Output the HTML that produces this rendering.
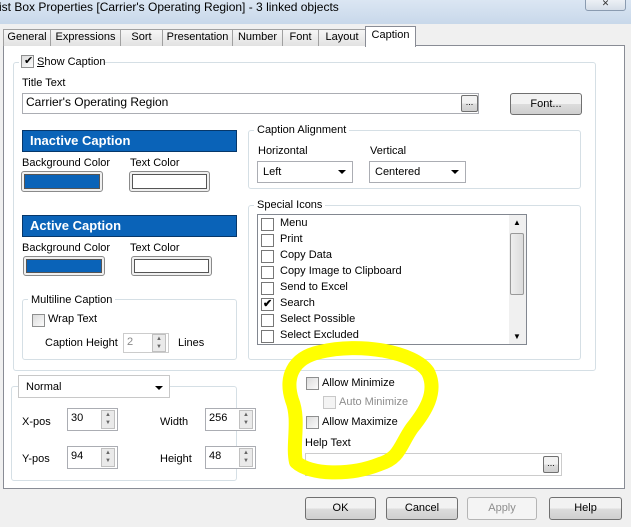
<!DOCTYPE html>
<html><head><style>
*{box-sizing:border-box}
body{margin:0;width:631px;height:527px;overflow:hidden;background:#f0f0f0;font-family:"Liberation Sans",sans-serif;font-size:11px;color:#000;position:relative}
.a{position:absolute}
.t{position:absolute;white-space:nowrap;line-height:14px}
.tab{position:absolute;top:29px;height:17px;border:1px solid #a0a0a0;border-bottom:none;background:linear-gradient(#f6f6f6,#e2e2e2);text-align:center;line-height:15px;font-size:11px}
.gb{position:absolute;border:1px solid #d5dfe5;border-radius:3px}
.in{position:absolute;background:#fff;border:1px solid #abadb3}
.btn{position:absolute;border:1px solid #707070;border-radius:3px;background:linear-gradient(#f2f2f2 50%,#dddddd 50%,#cfcfcf);text-align:center}
.cb{position:absolute;width:13px;height:13px;border:1px solid #8e8f8f;background:linear-gradient(135deg,#dcdcdc,#fbfbfb)}
.sw{position:absolute;border:1px solid #8a8a8a;border-radius:3px;padding:2px;background:#f0f0f0}
.sw div{width:100%;height:100%;border:1px solid #555}
.spin{position:absolute;width:14px;border:1px solid #c0c0c0;background:#eaeaea;font-size:6px;color:#666;text-align:center;line-height:8px}
.cap{position:absolute;background:#0a63b8;color:#fff;font-weight:bold;font-size:13px;padding-left:7px;line-height:20px;border:1px solid #06376a}
.combo{position:absolute;background:#fff;border:1px solid #abadb3}
.arr{position:absolute;right:6px;top:8px;width:0;height:0;border-left:4px solid transparent;border-right:4px solid transparent;border-top:4px solid #000}
.li{position:absolute;left:3px;height:16px}
.li .cb{left:0;top:2px;background:#fff;border-color:#777}
.li span{position:absolute;left:19px;top:1px;white-space:nowrap}
</style></head><body>
<div class="a" style="left:0;top:0;width:631px;height:24px;background:linear-gradient(#dbe6f3,#c8d8ea)"></div>
<div class="t" style="left:-1px;top:0px;font-size:12px">ist Box Properties [Carrier's Operating Region] - 3 linked objects</div>
<div class="a" style="left:585px;top:-3px;width:41px;height:14px;border:1px solid #8a9bb0;border-radius:3px;background:linear-gradient(#f1f4f8,#d5dde8);font-size:9px;text-align:center;color:#333">✕</div>
<div class="a" style="left:0;top:24px;width:631px;height:503px;background:#f0f0f0"></div>
<div class="a" style="left:3px;top:45px;width:622px;height:444px;border:1px solid #898c95;background:#fff"></div>
<div class="tab" style="left:3px;width:48px">General</div>
<div class="tab" style="left:50px;width:71px">Expressions</div>
<div class="tab" style="left:120px;width:43px">Sort</div>
<div class="tab" style="left:162px;width:71px">Presentation</div>
<div class="tab" style="left:232px;width:51px">Number</div>
<div class="tab" style="left:282px;width:37px">Font</div>
<div class="tab" style="left:318px;width:48px">Layout</div>
<div class="tab" style="left:365px;top:26px;width:51px;height:21px;background:#fff;border-color:#898c95;line-height:17px">Caption</div>
<div class="gb" style="left:13px;top:62px;width:583px;height:309px"></div>
<div class="a" style="left:19px;top:54px;width:86px;height:16px;background:#fff"></div>
<div class="cb" style="left:21px;top:55px"></div><div class="t" style="left:24px;top:54px;font-size:11px">✔</div>
<div class="t" style="left:37px;top:55px"><u>S</u>how Caption</div>
<div class="t" style="left:22px;top:76px">Title Text</div>
<div class="in" style="left:22px;top:93px;width:457px;height:21px"></div>
<div class="t" style="left:26px;top:95px;font-size:12px">Carrier's Operating Region</div>
<div class="btn" style="left:461px;top:95px;width:17px;height:17px;font-size:9px;line-height:13px;border-radius:2px">...</div>
<div class="btn" style="left:510px;top:93px;width:72px;height:22px;line-height:20px">Font...</div>
<div class="cap" style="left:22px;top:130px;width:215px;height:22px">Inactive Caption</div>
<div class="t" style="left:22px;top:156px">Background Color</div>
<div class="t" style="left:130px;top:156px">Text Color</div>
<div class="sw" style="left:21px;top:171px;width:82px;height:21px"><div style="background:#0a63b8"></div></div>
<div class="sw" style="left:129px;top:171px;width:81px;height:21px"><div style="background:#fff"></div></div>
<div class="cap" style="left:22px;top:215px;width:215px;height:22px">Active Caption</div>
<div class="t" style="left:22px;top:241px">Background Color</div>
<div class="t" style="left:130px;top:241px">Text Color</div>
<div class="sw" style="left:23px;top:256px;width:82px;height:20px"><div style="background:#0a63b8"></div></div>
<div class="sw" style="left:131px;top:256px;width:81px;height:20px"><div style="background:#fff"></div></div>
<div class="gb" style="left:22px;top:299px;width:215px;height:61px"></div>
<div class="t" style="left:28px;top:293px;background:#fff;padding:0 3px">Multiline Caption</div>
<div class="cb" style="left:32px;top:314px"></div>
<div class="t" style="left:48px;top:312px">Wrap Text</div>
<div class="t" style="left:45px;top:336px">Caption Height</div>
<div class="in" style="left:123px;top:333px;width:46px;height:20px;border-color:#ccc"></div>
<div class="t" style="left:127px;top:335px;color:#888">2</div>
<div class="spin" style="left:152px;top:334px;height:18px">▲<br>▼</div>
<div class="t" style="left:178px;top:336px">Lines</div>
<div class="gb" style="left:248px;top:130px;width:333px;height:59px"></div>
<div class="t" style="left:254px;top:123px;background:#fff;padding:0 3px">Caption Alignment</div>
<div class="t" style="left:258px;top:144px">Horizontal</div>
<div class="t" style="left:370px;top:144px">Vertical</div>
<div class="combo" style="left:257px;top:161px;width:96px;height:22px"><span class="t" style="left:5px;top:3px">Left</span><div class="arr"></div></div>
<div class="combo" style="left:369px;top:161px;width:97px;height:22px"><span class="t" style="left:5px;top:3px">Centered</span><div class="arr"></div></div>
<div class="gb" style="left:248px;top:205px;width:333px;height:155px"></div>
<div class="t" style="left:254px;top:198px;background:#fff;padding:0 3px">Special Icons</div>
<div class="in" style="left:257px;top:214px;width:270px;height:131px;border-color:#828790">
<div class="li" style="top:1px"><div class="cb"></div><span>Menu</span></div>
<div class="li" style="top:17px"><div class="cb"></div><span>Print</span></div>
<div class="li" style="top:33px"><div class="cb"></div><span>Copy Data</span></div>
<div class="li" style="top:49px"><div class="cb"></div><span>Copy Image to Clipboard</span></div>
<div class="li" style="top:65px"><div class="cb"></div><span>Send to Excel</span></div>
<div class="li" style="top:81px"><div class="cb"></div><span>Search</span><b class="t" style="left:2px;top:1px;font-size:11px">✔</b></div>
<div class="li" style="top:97px"><div class="cb"></div><span>Select Possible</span></div>
<div class="li" style="top:113px"><div class="cb"></div><span>Select Excluded</span></div>
<div class="a" style="left:251px;top:0;width:17px;height:129px;background:#f0f0f0"></div>
<div class="a" style="left:252px;top:18px;width:14px;height:62px;border:1px solid #999;border-radius:2px;background:linear-gradient(90deg,#eee,#dcdcdc)"></div>
<div class="t" style="left:255px;top:1px;font-size:8px">▲</div><div class="t" style="left:255px;top:115px;font-size:8px">▼</div>
</div>
<div class="gb" style="left:11px;top:386px;width:226px;height:95px"></div>
<div class="combo" style="left:18px;top:375px;width:152px;height:23px;border-color:#c8c8c8"><span class="t" style="left:7px;top:4px">Normal</span><div class="arr" style="top:10px"></div></div>
<div class="t" style="left:22px;top:415px">X-pos</div>
<div class="in" style="left:67px;top:408px;width:51px;height:23px"><span class="t" style="left:3px;top:2px">30</span><div class="spin" style="left:33px;top:1px;height:19px">▲<br>▼</div></div>
<div class="t" style="left:160px;top:415px">Width</div>
<div class="in" style="left:205px;top:408px;width:51px;height:23px"><span class="t" style="left:3px;top:2px">256</span><div class="spin" style="left:33px;top:1px;height:19px">▲<br>▼</div></div>
<div class="t" style="left:22px;top:452px">Y-pos</div>
<div class="in" style="left:67px;top:446px;width:51px;height:23px"><span class="t" style="left:3px;top:2px">94</span><div class="spin" style="left:33px;top:1px;height:19px">▲<br>▼</div></div>
<div class="t" style="left:160px;top:452px">Height</div>
<div class="in" style="left:205px;top:446px;width:51px;height:23px"><span class="t" style="left:3px;top:2px">48</span><div class="spin" style="left:33px;top:1px;height:19px">▲<br>▼</div></div>
<div class="cb" style="left:306px;top:377px"></div><div class="t" style="left:322px;top:376px">Allow Minimize</div>
<div class="cb" style="left:323px;top:396px;border-color:#c8c8c8;background:#f4f4f4"></div><div class="t" style="left:339px;top:395px;color:#8d8d8d">Auto Minimize</div>
<div class="cb" style="left:306px;top:416px"></div><div class="t" style="left:322px;top:415px">Allow Maximize</div>
<div class="t" style="left:305px;top:436px">Help Text</div>
<div class="in" style="left:305px;top:453px;width:257px;height:23px;border-color:#ccc"></div>
<div class="btn" style="left:543px;top:456px;width:16px;height:17px;font-size:9px;line-height:13px;border-radius:2px">...</div>
<svg class="a" style="left:0;top:0" width="631" height="527"><path d="M320 352 C360 342 415 352 428 372 C438 392 425 412 412 428 C400 445 400 458 380 464 C350 476 310 475 296 462 C292 445 300 420 292 400 C285 378 292 358 320 352 Z" fill="none" stroke="#ffff00" stroke-width="14" stroke-linejoin="round"/></svg>
<div class="btn" style="left:305px;top:497px;width:71px;height:23px;line-height:21px">OK</div>
<div class="btn" style="left:386px;top:497px;width:72px;height:23px;line-height:21px">Cancel</div>
<div class="btn" style="left:467px;top:497px;width:70px;height:23px;line-height:21px;color:#8d8d8d;border-color:#b5b5b5;background:#f4f4f4">Apply</div>
<div class="btn" style="left:549px;top:497px;width:73px;height:23px;line-height:21px">Help</div>
</body></html>
